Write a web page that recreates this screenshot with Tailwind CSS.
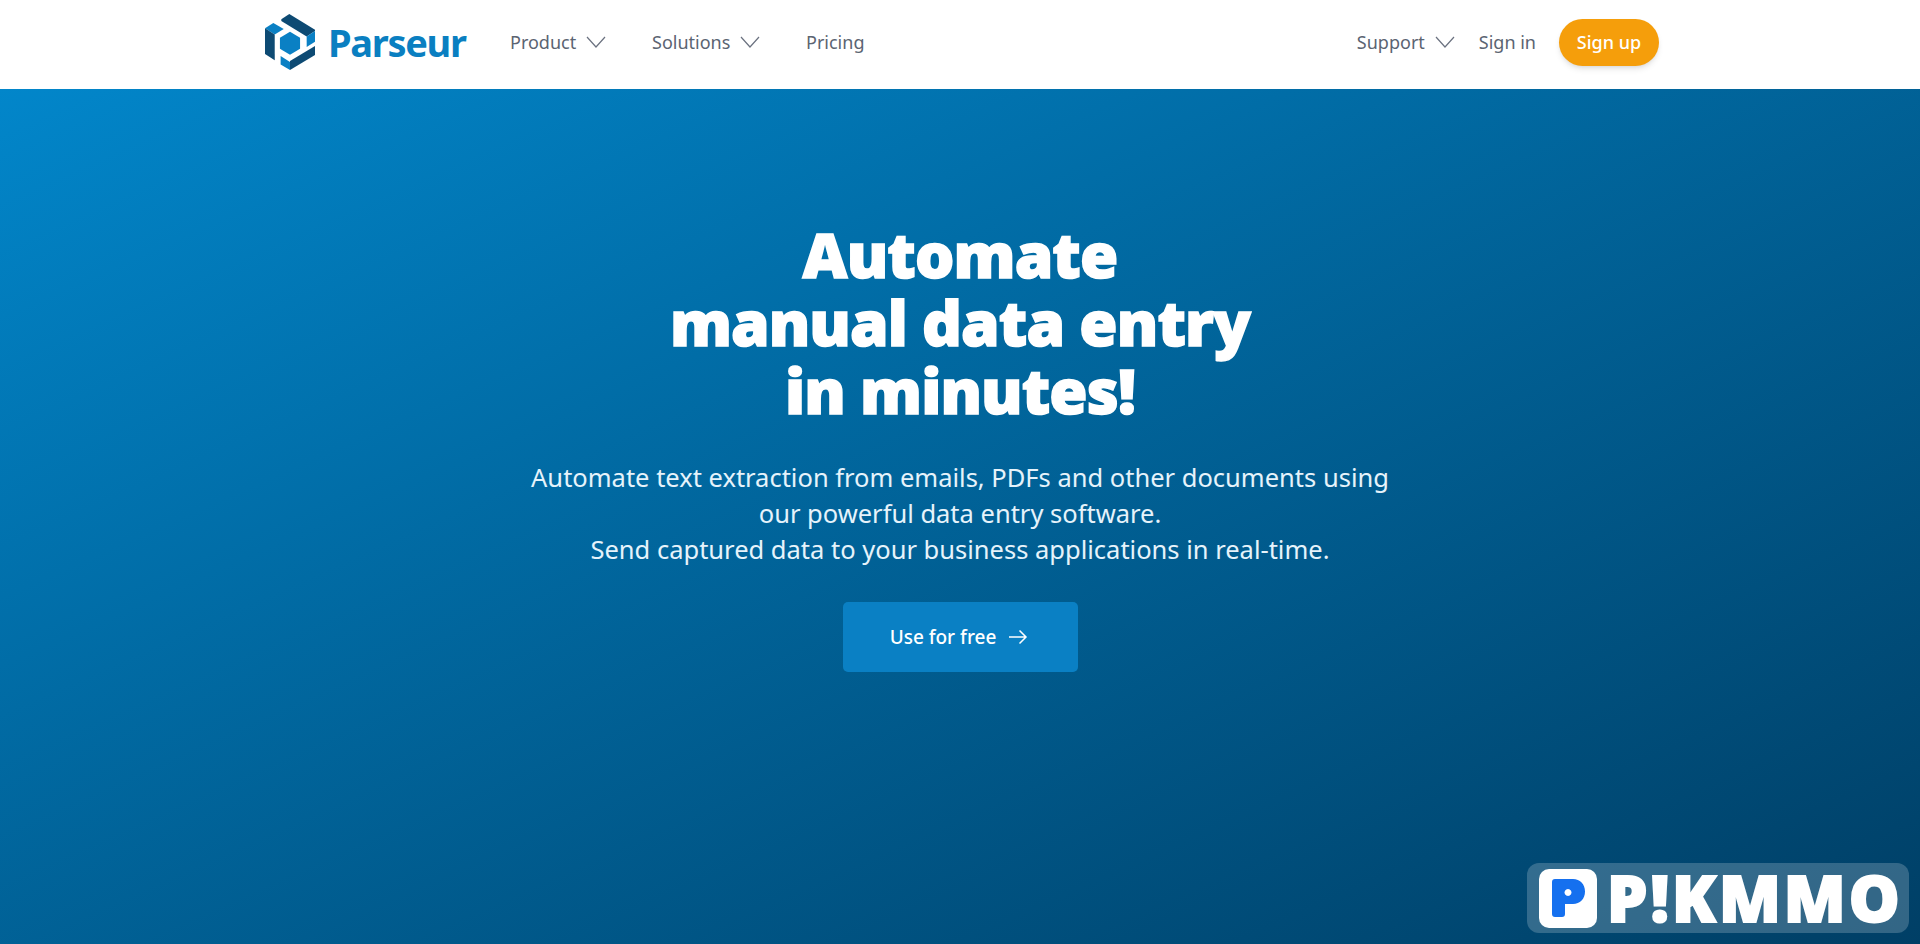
<!DOCTYPE html>
<html lang="en">
<head>
<meta charset="utf-8">
<title>Parseur</title>
<script src="https://cdn.jsdelivr.net/npm/@tailwindcss/browser@4"></script>
</head>
<body class="font-['Noto_Sans',sans-serif] h-[944px] overflow-hidden relative bg-white">
<header class="h-[89px] bg-white flex items-center pl-[265px] pr-[261px] pb-[5px]">
  <a class="flex items-center w-[245px] shrink-0">
    <svg width="50" height="56" viewBox="48 27 144 161" class="shrink-0">
      <polygon points="95,42 118,27 192,72 192,76 168,92 95,47" fill="#0d4a73"/>
      <polygon points="168,92 192,76 192,107 168,122" fill="#0a80c4"/>
      <polygon points="48,68 72,53 102,70 76,86" fill="#0a80c4"/>
      <polygon points="48,68 76,86 76,160 48,142" fill="#0d4a73"/>
      <polygon points="120,78 149,95 149,127 120,144 91,127 91,95" fill="#0a80c4"/>
      <polygon points="93,148 120,165 120,188 93,172" fill="#0a80c4"/>
      <polygon points="120,162 192,119 192,145 120,188" fill="#0d4a73"/>
    </svg>
    <span class="ml-[13px] text-[38px] leading-none font-bold tracking-[-1.3px] text-[#0a7fc1]">Parseur</span>
  </a>
  <nav class="flex items-center text-[18px] text-[#5b6472]">
    <a class="flex items-center w-[142px]">Product<svg class="ml-[10px]" width="20" height="12" viewBox="0 0 20 12" fill="none" stroke="#6b7280" stroke-width="1.2"><path d="M1 1l9 10 9-10"/></svg></a>
    <a class="flex items-center w-[154px]">Solutions<svg class="ml-[10px]" width="20" height="12" viewBox="0 0 20 12" fill="none" stroke="#6b7280" stroke-width="1.2"><path d="M1 1l9 10 9-10"/></svg></a>
    <a>Pricing</a>
  </nav>
  <div class="ml-auto flex items-center text-[18px] text-[#5b6472]">
    <a class="flex items-center">Support<svg class="ml-[10px]" width="20" height="12" viewBox="0 0 20 12" fill="none" stroke="#6b7280" stroke-width="1.2"><path d="M1 1l9 10 9-10"/></svg></a>
    <a class="ml-[24px]">Sign in</a>
    <a class="ml-[23px] w-[100px] h-[47px] rounded-full bg-[#f59e0b] text-white font-medium flex items-center justify-center shadow-md">Sign up</a>
  </div>
</header>
<main class="h-[855px] bg-linear-to-br from-[#0286ca] to-[#003f66] flex flex-col items-center pt-[131px]">
  <h1 class="text-[62px] leading-[68px] font-black text-white text-center tracking-[-0.9px] [-webkit-text-stroke:1.5px_white]">Automate<br>manual data entry<br>in minutes!</h1>
  <p class="mt-[35px] text-[25.5px] leading-[36px] text-[#e6f3fb] text-center">Automate text extraction from emails, PDFs and other documents using<br>our powerful data entry software.<br>Send captured data to your business applications in real-time.</p>
  <a class="mt-[35px] w-[235px] h-[70px] rounded-[5px] bg-[#0a80c4] text-white text-[19px] font-medium flex items-center justify-center pr-[2px]">Use for free
    <svg class="ml-[12px]" width="20" height="16" viewBox="0 0 20 16" fill="none" stroke="white" stroke-width="1.5"><path d="M1 8h17M11.500 1.500L18 8l-6.500 6.500"/></svg>
  </a>
</main>
<div class="absolute left-[1527px] top-[863px] w-[382px] h-[70px] rounded-[12px] bg-white/20 flex items-center pl-[12px]">
  <div class="w-[58px] h-[59px] rounded-[10px] bg-white flex items-center justify-center">
    <svg width="33" height="38" viewBox="0 0 33 38"><path fill-rule="evenodd" fill="#1570ef" d="M3 0h18c7 0 12 5 12 12.500S28 25 21 25h-8v10c0 2-1 3-3 3H3c-2 0-3-1-3-3V3c0-2 1-3 3-3zM16 10a3.500 3.500 0 1 0 .01 0z"/></svg>
  </div>
  <span class="ml-[10px] text-[64px] leading-none font-black text-white tracking-[3px] [-webkit-text-stroke:2px_white]">P!KMMO</span>
</div>
</body>
</html>
